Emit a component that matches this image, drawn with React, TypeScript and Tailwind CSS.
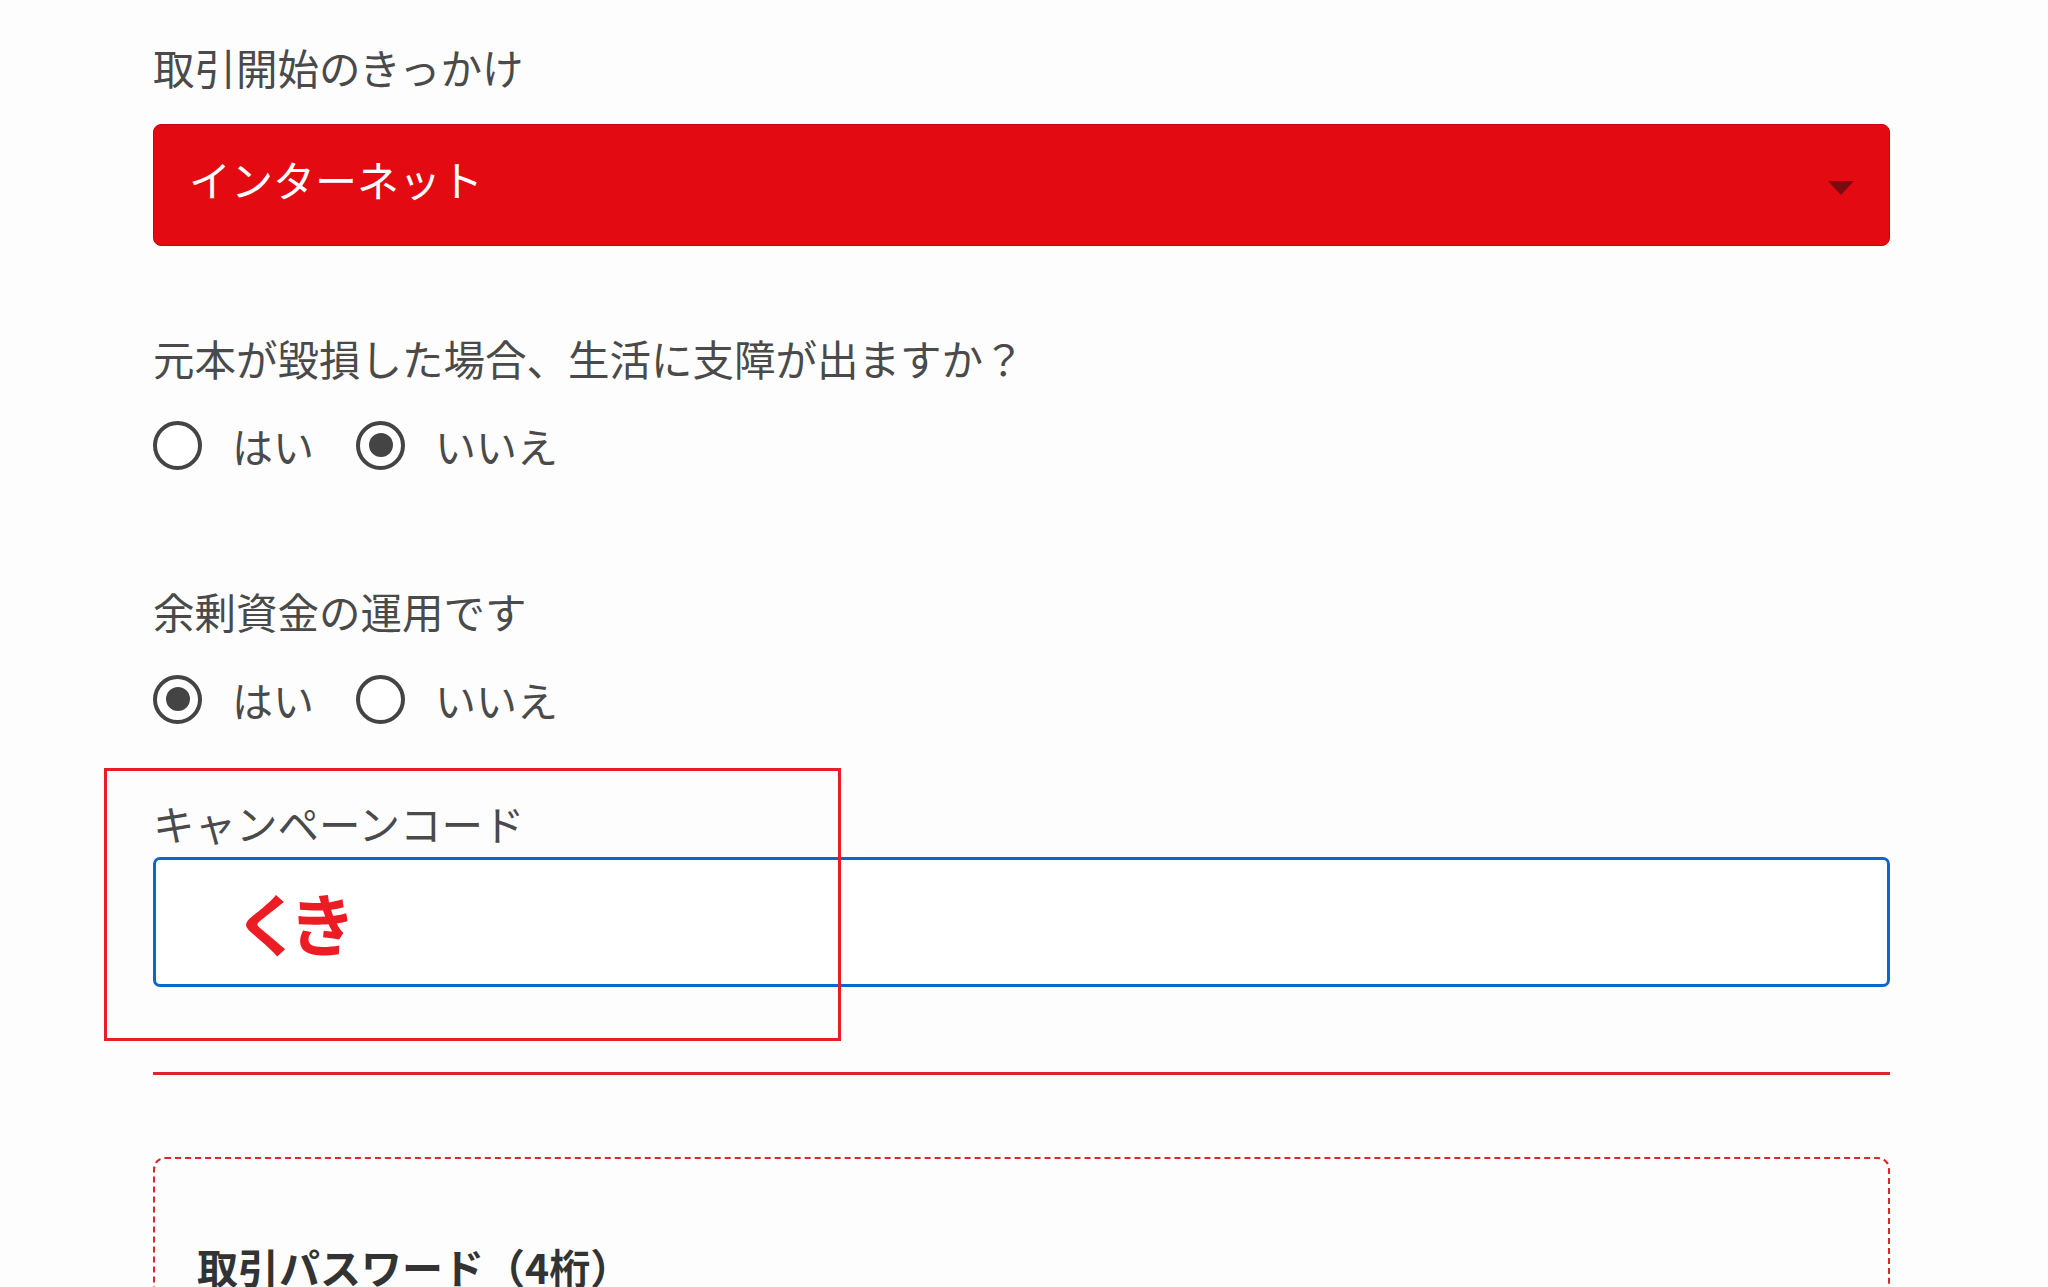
import React from "react";

const font = { fontFamily: '"Noto Sans CJK JP", "Noto Sans", sans-serif' };

function Radio({ checked, label }: { checked: boolean; label: string }) {
  return (
    <div className="flex items-center">
      <span className="flex h-[49px] w-[49px] items-center justify-center rounded-full border-[4px] border-[#444444] bg-white">
        {checked && <span className="block h-[24px] w-[24px] rounded-full bg-[#444444]" />}
      </span>
      <span className="ml-[30px] text-[41px] leading-[50px] text-[#4a4a4a]">{label}</span>
    </div>
  );
}

function RadioRow({ yes }: { yes: boolean }) {
  return (
    <div className="flex items-center gap-[42px]">
      <Radio checked={yes} label="はい" />
      <Radio checked={!yes} label="いいえ" />
    </div>
  );
}

export default function App() {
  return (
    <div className="h-[1287px] w-full overflow-hidden bg-[#fdfdfd]" style={font}>
      <div className="relative ml-[153px] w-[1737px] pt-[42px]">
        <div className="text-[41.5px] leading-[50px] text-[#4a4a4a]">取引開始のきっかけ</div>
        <div className="mt-[32px] flex h-[122px] items-center justify-between rounded-[8px] border border-[#c4070e] bg-[#e30a11] pb-[12px] pl-[35px] pr-[35px]">
          <span className="text-[42px] leading-[50px] text-white">インターネット</span>
          <svg width="26" height="14" viewBox="0 0 26 14" className="mt-[18px]">
            <polygon points="0,0 26,0 13,14" fill="#7a0c10" />
          </svg>
        </div>

        <div className="mt-[87px] text-[41.5px] leading-[50px] text-[#4a4a4a]">元本が毀損した場合、生活に支障が出ますか？</div>
        <div className="mt-[37px]">
          <RadioRow yes={false} />
        </div>

        <div className="mt-[116px] text-[41.5px] leading-[50px] text-[#4a4a4a]">余剰資金の運用です</div>
        <div className="mt-[38px]">
          <RadioRow yes={true} />
        </div>

        <div className="mt-[74px] text-[41.5px] leading-[50px] text-[#4a4a4a]">キャンペーンコード</div>
        <div className="mt-[9px] flex h-[130px] items-center rounded-[7px] border-[3px] border-[#0b67d0] bg-white pl-[78px]">
          <span className="text-[68px] font-bold leading-none tracking-[-0.2em] text-[#ec1c24]">くき</span>
        </div>

        <div className="absolute left-[-49px] top-[768px] h-[273px] w-[737px] border-[3px] border-[#ec1c24]" />

        <div className="mt-[85px] h-[3px] w-full bg-[#e0242b]" />

        <div className="mt-[82px] rounded-[12px] border-2 border-dashed border-[#e0242b] px-[42px] pt-[82px] pb-[60px]">
          <div className="text-[41px] font-bold leading-[50px] text-[#333333]">取引パスワード（4桁）</div>
        </div>
      </div>
    </div>
  );
}
